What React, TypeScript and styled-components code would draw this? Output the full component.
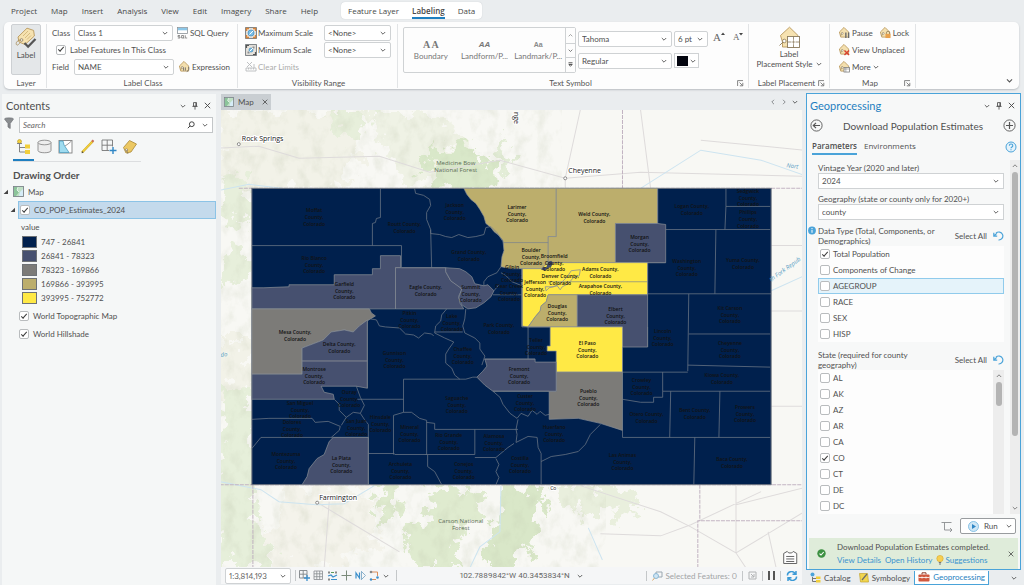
import React from "react";
import styled, { createGlobalStyle, css } from "styled-components";

const UI = `Lato, "Open Sans", "Liberation Sans", sans-serif`;
const MAPFONT = `"Open Sans", "Noto Sans", sans-serif`;
const BLUE = "#1f7fc0";
const SKY = "#4aa3d9";

const Global = createGlobalStyle`
  *, *::before, *::after { box-sizing: border-box; }
  body { margin: 0; background: #eaedef; font-family: ${UI}; font-size: 8px; line-height: 10px; color: #505050; }
  button, input, select { font: inherit; color: inherit; }
  h1, h2, h3, p { margin: 0; font-weight: 400; }
`;

/* ---------- shared controls ---------- */

const Shell = styled.div`
  min-height: 100vh;
  display: flex;
  flex-direction: column;
`;

const Plain = styled.button`
  display: inline-flex;
  align-items: center;
  gap: 2px;
  padding: 0;
  border: 0;
  background: none;
  white-space: nowrap;
`;

const Check = styled.input.attrs({ type: "checkbox" })`
  appearance: none;
  flex: none;
  display: grid;
  place-items: center;
  width: 10px;
  height: 10px;
  margin: 0;
  border: 1px solid #b9bcbe;
  border-radius: 2px;
  background: #fff;
  &:checked::after {
    content: "";
    width: 6px;
    height: 3px;
    margin-bottom: 2px;
    border: solid #3b3b3b;
    border-width: 0 0 1px 1px;
    transform: rotate(-48deg);
  }
`;

const PickFrame = styled.span<{ $w?: number; $square?: boolean }>`
  display: flex;
  align-items: center;
  height: 16px;
  width: ${(p) => (p.$w ? p.$w + "px" : "100%")};
  padding-right: 4px;
  border: 1px solid #cfd2d4;
  border-radius: ${(p) => (p.$square ? 0 : 2)}px;
  background: #fff;
`;

const PickSelect = styled.select`
  appearance: none;
  flex: 1;
  min-width: 0;
  height: 14px;
  padding: 0 0 0 3px;
  border: 0;
  background: none;
  line-height: 14px;
`;

const Chevron = ({ size = 6, up = false, color = "#555" }) => (
  <svg width={size} height={size} viewBox="0 0 6 6" fill="none" stroke={color} strokeWidth=".9">
    <path d={up ? "M.8 4 3 1.8 5.2 4" : "M.8 2 3 4.2 5.2 2"} />
  </svg>
);

function Pick(props: { label: string; value: string; w?: number; square?: boolean; id?: string }) {
  return (
    <PickFrame $w={props.w} $square={props.square}>
      <PickSelect id={props.id} aria-label={props.id ? undefined : props.label} defaultValue={props.value}>
        <option>{props.value}</option>
      </PickSelect>
      <Chevron />
    </PickFrame>
  );
}

/* ---------- icons ---------- */

const BigTag = () => (
  <svg width="22" height="22" viewBox="0 0 22 22">
    <path d="M3 10 12 1.2 18.6 3.4 19.4 9 10 17.5 4 15z" fill="#f6e2b0" stroke="#b9975a" strokeWidth=".9" />
    <path d="M8 9l5-5M10 11l5-5M12 12.5l4-4" stroke="#c9aa6c" strokeWidth=".7" />
    <circle cx="6.5" cy="13" r="1.4" fill="#fff" stroke="#8d7a55" strokeWidth=".8" />
    <path d="M6.5 13C3 13 .5 15 1.4 17.500 2 19 4 17.500 5 15.500" fill="none" stroke="#a58a58" strokeWidth=".8" />
    <path d="m9.500 16 3.600 3.700L20.500 12" fill="none" stroke="#555" strokeWidth="2.300" />
  </svg>
);

const PlacementIcon = () => (
  <svg width="23" height="23" viewBox="0 0 23 23">
    <path d="M2.500 9.500 11.500 1.200 20 9.500V21H4.500V16z" fill="#f6e2b0" stroke="#b9975a" strokeWidth=".9" />
    <circle cx="6.300" cy="15" r="1.800" fill="#fff" stroke="#8d7a55" strokeWidth=".8" />
    <path d="M5 16 1.500 19.500" stroke="#8d7a55" strokeWidth=".9" />
    <rect x="9.500" y="10.500" width="12" height="11" fill="#fff" stroke="#8a7a5c" strokeWidth=".9" />
    <path d="M15.500 10.500v11M9.500 16h12" stroke="#8a7a5c" strokeWidth=".8" />
    <rect x="13.200" y="13.800" width="4.600" height="4.400" fill="#fff" />
    <path d="M15.500 14.200v3.600M13.600 16h3.800" stroke="#8a7a5c" strokeWidth=".7" />
  </svg>
);

function TagIcon({ kind }: { kind: "expr" | "pause" | "lock" | "cross" | "more" }) {
  return (
    <svg width="12" height="13" viewBox="0 0 13 14">
      <path d="M1.500 6.500 6.500 1.500 11.500 6.500V12H3z" fill="#f3dfae" stroke="#b9975a" strokeWidth=".9" strokeLinejoin="round" />
      <path d="M4.500 7 3 10.500" stroke="#8d7a55" strokeWidth=".8" />
      <circle cx="4.600" cy="8" r="1" fill="#fff" stroke="#8d7a55" strokeWidth=".6" />
      {kind === "expr" && <path d="M6 11.500V8M8 8v3.500M9.500 12.500c2.500-1 2.500-3.500 2-5" fill="none" stroke="#666" strokeWidth=".9" />}
      {kind === "pause" && <path d="M8.500 7v6M11.500 7v6" stroke="#6a6a6a" strokeWidth="1.500" />}
      {kind === "lock" && (
        <g>
          <path d="M8 9V7.500a1.800 1.800 0 0 1 3.600 0V9" fill="none" stroke="#8d7a55" strokeWidth=".8" />
          <rect x="7" y="8.500" width="5.500" height="4.500" fill="#e9a14c" />
        </g>
      )}
      {kind === "cross" && <path d="m7 8 5 5M12 8l-5 5" stroke="#d8412f" strokeWidth="1.500" />}
      {kind === "more" && (
        <g>
          <rect x="6.500" y="8" width="6" height="5" fill="#fff" stroke="#777" strokeWidth=".8" />
          <path d="M6.500 9.700h6M8.500 8v5" stroke="#777" strokeWidth=".6" />
        </g>
      )}
    </svg>
  );
}

const SqlIcon = () => (
  <svg width="11" height="12" viewBox="0 0 11 12">
    <rect x=".5" y=".5" width="10" height="6" fill="#fff" stroke="#8b9298" strokeWidth=".8" />
    <rect x=".9" y=".9" width="9.200" height="2.400" fill="#8cc7e8" />
    <path d="M3 8.500H1v1.300h2V11H.800M4.600 8.500h2V11h-2zM6 10.500l1 1M8.300 8.300V11H10.200" fill="none" stroke="#777" strokeWidth=".8" />
  </svg>
);

const ScaleIcon = ({ min = false }) => (
  <svg width="12" height="12" viewBox="0 0 12 12">
    <rect x=".6" y=".6" width="10.800" height="10.800" fill="#e7e3dc" stroke="#6d7378" strokeWidth=".9" />
    {min ? (
      <g>
        <path d="M1.500 4V1.500H4M8 10.500h2.500V8" fill="none" stroke="#555" strokeWidth="1.200" />
        <path d="M7.500 2.500h2v2h-2zM2.500 7.500h2v2h-2z" fill="#8a8f94" />
      </g>
    ) : (
      <path d="M1.500 4V1.500H4M8 1.500h2.500V4M10.500 8v2.500H8M4 10.500H1.500V8" fill="none" stroke="#d8843a" strokeWidth="1.400" />
    )}
    <circle cx="6" cy="6" r={min ? 2 : 3} fill="#7cc0e8" stroke="#3f8dc0" strokeWidth=".7" />
    <path d="M4.500 7.500 8 4" stroke="#fff" strokeWidth="1" />
  </svg>
);

const ClearIcon = () => (
  <svg width="12" height="11" viewBox="0 0 12 11" fill="none" stroke="#b9bbbd" strokeWidth=".9">
    <path d="m2 1 5 5M7 1 2 6M1 7h10v3H1zM3.500 7v1.500M6 7v1.500M8.500 7v1.500M9 3v4" />
  </svg>
);

const Launcher = () => (
  <svg width="7" height="7" viewBox="0 0 7 7" fill="none" stroke="#666" strokeWidth=".8">
    <path d="M.6 6V.6H6M2.500 2.500l3 3M5.800 2.800v3h-3" />
  </svg>
);

const Close = ({ size = 7 }) => (
  <svg width={size} height={size} viewBox="0 0 7 7" stroke="#444" strokeWidth=".9">
    <path d="m.8.8 5.400 5.400M6.200.8.8 6.200" />
  </svg>
);

const Pin = () => (
  <svg width="6" height="8" viewBox="0 0 6 8" fill="none" stroke="#555" strokeWidth=".9">
    <path d="M1.500.6h3v3.600h-3zM.4 4.400h5.200M3 4.400v3.200M3.900.6v3.600" />
  </svg>
);

const MapGlyph = ({ size = 11 }) => (
  <svg width={size} height={size} viewBox="0 0 11 11">
    <rect x=".5" y=".5" width="10" height="10" fill="#bfe0c4" stroke="#7d868c" strokeWidth=".9" />
    <path d="M1 1h4l-1 3 2 2-3 4H1z" fill="#8cc49a" />
    <path d="M6 10 7 6l3-3v7z" fill="#d6ecf7" />
    <path d="M5 1 4 4l2 2" fill="none" stroke="#fff" strokeWidth=".7" />
  </svg>
);

/* ---------- menu tabs ---------- */

const TabBar = styled.nav`
  display: flex;
  align-items: center;
  height: 22px;
  padding: 0 11px 1px;
  gap: 14px;
  font-family: ${MAPFONT};
  color: #484848;
`;

const TabGroup = styled.div`
  display: flex;
  gap: 13px;
  height: 17px;
  margin-left: 9px;
  padding: 0 7px;
  border-radius: 4px;
  background: #fff;
  box-shadow: 0 0 1px #b8bcc0;
`;

const MenuTab = styled(Plain)<{ $on?: boolean }>`
  height: 17px;
  ${(p) =>
    p.$on &&
    css`
      font-weight: 600;
      box-shadow: inset 0 -2px 0 ${BLUE};
    `}
`;

/* ---------- ribbon ---------- */

const Ribbon = styled.section`
  display: flex;
  margin: 0 5px 0 4px;
  height: 67px;
  border-radius: 5px;
  background: #fdfdfd;
  box-shadow: 0 1px 2px #b9bdc1;
`;

const Group = styled.div<{ $w: number }>`
  display: flex;
  flex-direction: column;
  width: ${(p) => p.$w}px;
  margin: 2px 0 1px;
  border-right: 1px solid #e2e4e6;
`;

const GroupBody = styled.div<{ $pad?: string }>`
  flex: 1;
  padding: ${(p) => p.$pad || "0 6px"};
`;

const Caption = styled.div`
  display: flex;
  align-items: center;
  height: 10px;
  padding: 0 4px 0 6px;
  color: #555;
  span { flex: 1; text-align: center; }
`;

const Rows = styled.div`
  display: grid;
  grid-auto-rows: 17px;
  align-items: center;
`;

const Row = styled.div<{ $gap?: number; $pl?: number }>`
  display: flex;
  align-items: center;
  gap: ${(p) => p.$gap ?? 4}px;
  padding-left: ${(p) => p.$pl ?? 0}px;
`;

const FieldLabel = styled.label`
  width: 18px;
`;

const InlineLabel = styled.label`
  display: flex;
  align-items: center;
  gap: 4px;
`;

const LabelButton = styled.button`
  display: flex;
  flex-direction: column;
  align-items: center;
  gap: 1px;
  width: 30px;
  height: 51px;
  padding: 2px 0 0;
  border: 1px solid #cdd0d3;
  border-radius: 2px;
  background: #e4e7e9;
`;

const ScaleRow = styled.div<{ $off?: boolean }>`
  display: grid;
  grid-template-columns: 12px 1fr 67px;
  align-items: center;
  column-gap: 1px;
  color: ${(p) => (p.$off ? "#ababab" : "inherit")};
`;

const Symbols = styled.div`
  display: flex;
  align-items: flex-start;
  gap: 2px;
`;

const Gallery = styled.div`
  display: flex;
  width: 173px;
  height: 46px;
  border: 1px solid #cfd2d4;
  border-radius: 2px;
`;

const GalleryItem = styled.button<{ $look: "serif" | "ital" | "small" }>`
  flex: 1;
  min-width: 0;
  padding: 0;
  border: 0;
  background: none;
  color: #777;
  b {
    display: block;
    height: 12px;
    ${(p) => p.$look === "serif" && `font: 700 10px/12px "Liberation Serif", serif;`}
    ${(p) => p.$look === "ital" && `font: italic 700 8px/12px "Liberation Sans", sans-serif;`}
    ${(p) => p.$look === "small" && `font: 700 7px/12px "Liberation Sans", sans-serif; color: #8a8a8a;`}
  }
`;

const Spinner = styled.div`
  display: grid;
  grid-template-rows: repeat(3, 1fr);
  width: 10px;
  border-left: 1px solid #cfd2d4;
  button {
    display: grid;
    place-items: center;
    padding: 0;
    border: 0;
    background: #fdfdfd;
  }
  button + button { border-top: 1px solid #cfd2d4; }
`;

const FontGrid = styled.div`
  display: grid;
  grid-template-columns: 94px 34px;
  gap: 6px 2px;
  padding-top: 4px;
`;

const ColorButton = styled.button`
  display: flex;
  align-items: center;
  gap: 2px;
  width: 25px;
  height: 15px;
  padding: 0 0 0 2px;
  border: 1px solid #cfd2d4;
  background: #fff;
  i { width: 11px; height: 10px; background: #03050f; }
`;

const SizeButtons = styled.div`
  display: flex;
  gap: 8px;
  padding: 5px 0 0 3px;
  button { font-family: "Liberation Serif", serif; color: #666; gap: 0; }
  svg { align-self: flex-start; }
`;

const Letter = styled.span<{ $big?: boolean }>`
  font-size: ${(p) => (p.$big ? 11 : 9)}px;
`;

const Stack = styled.button`
  display: flex;
  flex-direction: column;
  align-items: center;
  width: 100%;
  padding: 0;
  border: 0;
  background: none;
  span { display: flex; align-items: center; gap: 3px; }
`;

const RibbonEnd = styled.div`
  flex: 1;
  display: flex;
  align-items: flex-end;
  justify-content: flex-end;
  padding: 0 6px 5px;
`;

function RibbonBar() {
  return (
    <Ribbon>
      <Group $w={43}>
        <GroupBody $pad="0 0 0 7px">
          <LabelButton>
            <BigTag />
            Label
          </LabelButton>
        </GroupBody>
        <Caption><span>Layer</span></Caption>
      </Group>
      <Group $w={191}>
        <GroupBody $pad="0 5px">
          <Rows>
            <Row>
              <FieldLabel htmlFor="class">Class</FieldLabel>
              <Pick id="class" label="Class" value="Class 1" w={99} />
              <Plain><SqlIcon />SQL Query</Plain>
            </Row>
            <Row $pl={4}>
              <InlineLabel><Check defaultChecked />Label Features In This Class</InlineLabel>
            </Row>
            <Row>
              <FieldLabel htmlFor="field">Field</FieldLabel>
              <Pick id="field" label="Field" value="NAME" w={100} />
              <Plain><TagIcon kind="expr" />Expression</Plain>
            </Row>
          </Rows>
        </GroupBody>
        <Caption><span>Label Class</span></Caption>
      </Group>
      <Group $w={160}>
        <GroupBody $pad="0 6px 0 7px">
          <Rows>
            <ScaleRow><ScaleIcon /><label htmlFor="maxs">Maximum Scale</label><Pick id="maxs" label="Maximum Scale" value="&lt;None&gt;" /></ScaleRow>
            <ScaleRow><ScaleIcon min /><label htmlFor="mins">Minimum Scale</label><Pick id="mins" label="Minimum Scale" value="&lt;None&gt;" /></ScaleRow>
            <ScaleRow $off><ClearIcon /><span>Clear Limits</span></ScaleRow>
          </Rows>
        </GroupBody>
        <Caption><span>Visibility Range</span></Caption>
      </Group>
      <Group $w={351}>
        <GroupBody $pad="3px 0 0 5px">
          <Symbols>
            <Gallery>
              <GalleryItem $look="serif"><b>A A</b>Boundary</GalleryItem>
              <GalleryItem $look="ital"><b>AA</b>Landform/P...</GalleryItem>
              <GalleryItem $look="small"><b>Aa</b>Landmark/P...</GalleryItem>
              <Spinner>
                <button aria-label="Scroll up"><Chevron up size={5} color="#888" /></button>
                <button aria-label="Scroll down"><Chevron size={5} /></button>
                <button aria-label="Expand gallery">
                  <svg width="5" height="6" viewBox="0 0 5 6" fill="none" stroke="#444" strokeWidth=".9"><path d="M.5.800h4M.800 2.500 2.500 4.200 4.200 2.500z" /></svg>
                </button>
              </Spinner>
            </Gallery>
            <FontGrid>
              <Pick label="Font" value="Tahoma" />
              <Pick label="Size" value="6 pt" />
              <Pick label="Style" value="Regular" />
              <ColorButton aria-label="Text color"><i /><Chevron /></ColorButton>
            </FontGrid>
            <SizeButtons>
              <Plain aria-label="Increase size">
                <Letter $big>A</Letter>
                <svg width="4" height="4" viewBox="0 0 4 4"><path d="M0 3 2 .5 4 3z" fill="#444" /></svg>
              </Plain>
              <Plain aria-label="Decrease size">
                <Letter>A</Letter>
                <svg width="4" height="4" viewBox="0 0 4 4"><path d="M0 1 2 3.500 4 1z" fill="#444" /></svg>
              </Plain>
            </SizeButtons>
          </Symbols>
        </GroupBody>
        <Caption><span>Text Symbol</span><Launcher /></Caption>
      </Group>
      <Group $w={81}>
        <GroupBody $pad="2px 0 0">
          <Stack>
            <PlacementIcon />
            <span>Label</span>
            <span>Placement Style <Chevron /></span>
          </Stack>
        </GroupBody>
        <Caption><span>Label Placement</span><Launcher /></Caption>
      </Group>
      <Group $w={86}>
        <GroupBody $pad="0 0 0 8px">
          <Rows>
            <Row $gap={6}><Plain><TagIcon kind="pause" />Pause</Plain><Plain><TagIcon kind="lock" />Lock</Plain></Row>
            <Row><Plain><TagIcon kind="cross" />View Unplaced</Plain></Row>
            <Row><Plain><TagIcon kind="more" />More <Chevron /></Plain></Row>
          </Rows>
        </GroupBody>
        <Caption><span>Map</span><Launcher /></Caption>
      </Group>
      <RibbonEnd><Chevron size={7} /></RibbonEnd>
    </Ribbon>
  );
}

/* ---------- body ---------- */

const Body = styled.main`
  flex: 1;
  display: flex;
  min-height: 0;
  padding-top: 4px;
`;

const PaneHead = styled.header`
  display: flex;
  align-items: center;
  gap: 6px;
  height: 23px;
  h2 { flex: 1; font-size: 11px; line-height: 14px; }
`;

const ContentsPane = styled.aside`
  width: 214px;
  margin: 1px 0 2px 2px;
  background: #f5f7f7;
  ${PaneHead} { padding: 0 5px 0 4px; }
`;

const SearchRow = styled.div`
  display: flex;
  gap: 5px;
  padding: 0 3px 0 2px;
`;

const SearchBox = styled.div`
  flex: 1;
  display: flex;
  align-items: center;
  gap: 7px;
  height: 16px;
  padding-right: 4px;
  border: 1px solid #c3c6c8;
  background: #fff;
  input {
    flex: 1;
    min-width: 0;
    padding: 0 3px;
    border: 0;
    background: none;
    font-style: italic;
    outline: 0;
  }
  input::placeholder { color: #666; }
`;

const ViewIcons = styled.div`
  display: flex;
  width: 128px;
  margin: 6px 0 0 11px;
  border-bottom: 1px solid #dcdee0;
`;

const ViewIcon = styled.button<{ $on?: boolean }>`
  flex: 1;
  display: grid;
  place-items: center;
  height: 22px;
  padding: 0 0 6px;
  border: 0;
  border-bottom: 2px solid ${(p) => (p.$on ? BLUE : "transparent")};
  background: none;
`;

const Heading = styled.h3`
  padding: 6px 11px 0;
  font-size: 10px;
  font-weight: 700;
  line-height: 14px;
`;

const TreeRow = styled.div<{ $pl: number; $on?: boolean; $h?: number }>`
  display: flex;
  align-items: center;
  gap: 4px;
  height: ${(p) => p.$h ?? 18}px;
  padding-left: ${(p) => p.$pl}px;
  ${(p) => p.$on && css`
    flex: 1;
    border: 1px solid #8cc3e6;
    background: #c4daec;
  `}
`;

const TreeLine = styled.div`
  display: flex;
  align-items: center;
  gap: 2px;
  padding-left: 8px;
`;

const Legend = styled.ul`
  margin: 0;
  padding: 0 0 2px 20px;
  list-style: none;
  li { display: flex; align-items: center; gap: 4px; height: 14px; }
`;

const Swatch = styled.i<{ $c: string }>`
  width: 15px;
  height: 12px;
  border: 1px solid #6e7276;
  background: ${(p) => p.$c};
`;

const Expander = () => (
  <svg width="6" height="6" viewBox="0 0 6 6"><path d="M5 .8V5H.6z" fill="#444" /></svg>
);

const Y = "#f2cf3c";
const viewIcons = [
  <g key="a"><circle cx="3.500" cy="2.500" r="2" fill={Y} stroke="#b99a20" strokeWidth=".6" /><path d="M1 4.500h5M3.500 5v8H9M3.500 8.500H9" fill="none" stroke="#777" strokeWidth=".9" /><rect x="9" y="5.500" width="5" height="4" fill={Y} /><rect x="9" y="11" width="5" height="4" fill={Y} /></g>,
  <g key="b" fill="#ededed" stroke="#8a8a8a" strokeWidth=".9"><path d="M1 3.500v8c0 3 13 3 13 0v-8" /><ellipse cx="7.500" cy="3.500" rx="6.500" ry="2.300" /></g>,
  <g key="c"><rect x="1" y="1.500" width="13" height="12.500" fill="#fff" stroke="#808080" strokeWidth=".9" /><path d="M1.500 2H5l1 4 5 7.500H1.500z" fill="#9fdcf0" stroke="#4d9dbf" strokeWidth=".8" /><path d="M7 7l3-2 3.500-3" fill="none" stroke="#999" /></g>,
  <g key="d"><path d="M2 13.500 13 2" stroke="#caa92a" strokeWidth="2.400" /><path d="M2.800 12.600 13 2" stroke={Y} strokeWidth="1.400" /><path d="m1.500 14.300.700-2 1.300 1.200z" fill="#444" /><path d="m12 2.800 1.500-1.500" stroke="#c96a5a" strokeWidth="2" /></g>,
  <g key="e" fill="none"><path d="M1 1h10.500v10.500H1zM6.200 1v10.500M1 6.200h10.500" stroke="#777" strokeWidth=".9" /><path d="M12 7.500v8M8 11.500h8" stroke="#f5f7f7" strokeWidth="3" /><path d="M12 8v7M8.500 11.500h7" stroke="#2f86c5" strokeWidth="1.400" /></g>,
  <g key="f"><path d="M1.500 8.500 7.500 1.500 14.500 5 9 13 4 14z" fill="#ecc862" stroke="#a98836" strokeWidth=".8" /><circle cx="4.500" cy="11" r="1.200" fill="#fff" stroke="#8d7a55" strokeWidth=".7" /><path d="M4.500 11 6 15" stroke="#8d7a55" strokeWidth=".8" /></g>,
];
const viewNames = ["Drawing order", "Data source", "Selection", "Editing", "Snapping", "Labeling"];

const classes: [string, string][] = [
  ["#00204d", "747 - 26841"],
  ["#46506f", "26841 - 78323"],
  ["#7c7b78", "78323 - 169866"],
  ["#bcae6c", "169866 - 393995"],
  ["#ffe945", "393995 - 752772"],
];

function Contents() {
  return (
    <ContentsPane>
      <PaneHead><h2>Contents</h2><Chevron /><Pin /><Close /></PaneHead>
      <SearchRow>
        <svg width="10" height="12" viewBox="0 0 10 12"><path d="M.5 2c0-1.500 9-1.500 9 0L6.200 6.500v5L4 10V6.500z" fill="#8a8d90" stroke="#6c6f72" strokeWidth=".7" /></svg>
        <SearchBox>
          <input placeholder="Search" aria-label="Search" />
          <svg width="8" height="8" viewBox="0 0 8 8" fill="none" stroke="#444" strokeWidth="1"><circle cx="4.800" cy="3.200" r="2.400" /><path d="M3 5 .8 7.200" /></svg>
          <Chevron />
        </SearchBox>
      </SearchRow>
      <ViewIcons>
        {viewIcons.map((g, i) => (
          <ViewIcon key={i} $on={i === 0} aria-label={viewNames[i]}><svg width="16" height="16" viewBox="0 0 16 16">{g}</svg></ViewIcon>
        ))}
      </ViewIcons>
      <Heading>Drawing Order</Heading>
      <TreeRow $pl={1} $h={19}><Expander /><MapGlyph />Map</TreeRow>
      <TreeLine>
        <Expander />
        <TreeRow as="label" $pl={1} $on><Check defaultChecked />CO_POP_Estimates_2024</TreeRow>
      </TreeLine>
      <TreeRow $pl={19} $h={16}>value</TreeRow>
      <Legend>
        {classes.map(([c, t]) => (
          <li key={t}><Swatch $c={c} />{t}</li>
        ))}
      </Legend>
      <TreeRow as="label" $pl={17}><Check defaultChecked />World Topographic Map</TreeRow>
      <TreeRow as="label" $pl={17}><Check defaultChecked />World Hillshade</TreeRow>
    </ContentsPane>
  );
}

/* ---------- map ---------- */

const MapPane = styled.section`
  flex: 1;
  min-width: 0;
  display: flex;
  flex-direction: column;
  margin: 1px 4px 3px 5px;
`;

const DocTabs = styled.div`
  display: flex;
  align-items: center;
  height: 16px;
`;

const DocTab = styled.div`
  display: flex;
  align-items: center;
  gap: 4px;
  width: 50px;
  height: 16px;
  padding: 0 3px;
  background: #c9ced2;
  span { flex: 1; }
`;

const DocArrows = styled.div`
  display: flex;
  gap: 5px;
  margin-left: auto;
  padding-right: 4px;
`;

const MapView = styled.div`
  position: relative;
  flex: 1;
  min-height: 0;
  > svg { position: absolute; inset: 0; width: 100%; height: 100%; }
`;

const StatusBar = styled.footer`
  display: flex;
  align-items: center;
  height: 17px;
  padding: 0 4px;
  background: #f5f6f7;
  color: #666;
  font-variant-numeric: proportional-nums;
`;

const Tools = styled.div`
  display: flex;
  align-items: center;
  gap: 3px;
  margin-left: 4px;
  padding: 0 7px 0 3px;
  border: solid #c4c7c9;
  border-width: 0 1px;
  button { display: flex; }
`;

const Coords = styled.div`
  display: flex;
  align-items: center;
  gap: 7px;
  margin: 0 auto;
  font-family: Roboto, "Open Sans", sans-serif;
`;

const Cell = styled.div<{ $dim?: boolean }>`
  display: flex;
  align-items: center;
  gap: 3px;
  height: 10px;
  padding: 0 5px;
  border-left: 1px solid #c4c7c9;
  color: ${(p) => (p.$dim ? "#a2a4a6" : "inherit")};
  &:last-child { padding-right: 0; }
`;

const NAVY = "#00204d";
const SLATE = "#46506f";
const GRAY = "#7c7b78";
const KHAKI = "#bcae6c";
const YELLOW = "#ffe945";

const areas: [string, string][] = [
  [KHAKI, "464,188 467,194 471,199 476,203 480,209 484,216 486,223 491,227 494,231 499,235 503,240 504,250 502,256 501,266 511,268 548,268 548,236 556,236 556,188"],
  [KHAKI, "556,188 657,188 657,223 615,223 615,262 548,262 548,236 556,236"],
  [SLATE, "615,223 657,223 665,224 665,262 615,262"],
  [YELLOW, "522,268 541,268 548,262 647,262 647,294 548,294 546,301 541,305 540,310 535,316 528,326 522,325"],
  [KHAKI, "548,294 577,294 577,326 528,326 535,316 540,310 541,305 546,301"],
  [SLATE, "577,294 647,294 647,346 622,346 622,326 577,326"],
  [YELLOW, "550,326 622,326 622,371 556,371 556,350 547,350 547,345 550,345"],
  [GRAY, "556,371 622,371 622,429 600,422 578,417 549,418 549,390 556,390"],
  [SLATE, "477,376 483,370 487,365 485,358 535,358 535,361 556,361 556,390 493,390 485,384"],
  [SLATE, "253,287 265,287 290,286 290,284 335,284 335,274 373,274 373,268 381,268 381,255 401,255 401,267 396,267 396,308 253,308"],
  [SLATE, "396,267 446,267 446,271 451,280 460,286 462,289 459,295 460,302 464,308 396,308"],
  [SLATE, "446,267 460,268 466,271 472,276 475,283 484,285 488,284 494,290 491,296 484,302 476,307 468,308 462,304 459,297 462,288 451,280 446,271"],
  [GRAY, "253,308 370,308 372,312 376,315 371,318 360,325 354,331 345,329 332,331 324,339 303,347 303,373 253,373"],
  [SLATE, "368,319 368,360 303,360 303,347 324,339 332,331 345,329 354,331 360,325"],
  [SLATE, "253,373 303,373 303,360 368,360 368,387 357,385 322,385 325,391 334,393 335,398 253,398"],
  [SLATE, "303,483 308,475 310,467 318,457 325,453 330,440 334,436 369,436 369,483"],
];

const borders = [
  "M381 188V217L377 218 376 222 373 223V245M253 245H402V267H446",
  "M415 188 416 193 424 195 430 199 431 205 427 212 427 219 431 229 431 233 440 234 446 236 452 237 459 234 468 237 476 236 484 234 486 227 491 226M431 229 432 267",
  "M491 226 497 232 503 241M501 266 497 272 488 276 484 281 484 285M501 272 506 275 512 281 522 285M493 294H522M522 268V326H550M494 290 499 284",
  "M371 318 377 319 380 325 386 326 400 327 406 333 414 334 419 337 425 332 432 333 434 335M447 308 442 314 441 320 436 325 435 332 445 337 454 341 449 348 446 353 446 362 452 367 455 374 460 378M435 331H463M466 308 465 318 463 325 465 332 475 337 480 342 480 348 485 355 482 364M404 411V378H466L473 376 477 376M368 319V387M358 398H404M484 358H535",
  "M335 398 340 403 340 409 347 416 354 411 361 412 365 404 361 396 357 385M253 418 270 417H313L316 421 329 420 341 425 340 429 332 436M347 416 342 424M361 412 365 418 369 423V483M369 452H395M253 447 262 436H369",
  "M394 453V414L404 411 412 411 420 417 427 419V453H395M427 421 435 422V428H513M426 453H475V428M475 456H496L508 446 514 442M428 453V465L435 470 442 483M496 457 499 463 496 470 499 476 496 483",
  "M493 390 500 396 503 403 510 412 517 417 521 412 528 415 532 409 537 413 540 410 545 414 549 413M518 418 516 428 517 433 516 441 528 435 537 436 538 446 541 452 541 483M541 460 551 455 565 453 578 450 585 443 590 433 600 423M513 428H518M493 390H549",
  "M528 326V358M657 188V223M725 188V206H769M725 206 724 229M665 229H769M715 229 714 293M647 262H665M647 293H770M688 293 687 370M688 333H769M687 364 769 366M622 346V371M647 346V326M622 371H687",
  "M662 371V390H769M622 398 640 401 653 401V396H662V390M622 429V436H769M670 390 669 436M719 390 718 436M694 436 693 483M647 262V294",
  "M503 242H548M548 268H541M548 281H647M522 326V268",
];

const labels: [number, number, string][] = [
  [315, 210, "Moffat|County,|Colorado"], [405, 223, "Routt County,|Colorado"], [455, 205, "Jackson|County,|Colorado"],
  [517, 207, "Larimer|County,|Colorado"], [594, 214, "Weld County,|Colorado"], [691, 206, "Logan County,|Colorado"],
  [747, 191, "Sedgwick|County,|Colorado"], [747, 212, "Phillips|County,|Colorado"], [639, 236, "Morgan|County,|Colorado"],
  [686, 260, "Washington|County,|Colorado"], [742, 259, "Yuma County,|Colorado"], [315, 257, "Rio Blanco|County,|Colorado"],
  [469, 251, "Grand County,|Colorado"], [531, 249, "Boulder|County,|Colorado"], [554, 255, "Broomfield|County,|Colorado"],
  [600, 268, "Adams County,|Colorado"], [560, 275, "Denver County,|Colorado"], [600, 285, "Arapahoe County,|Colorado"],
  [535, 281, "Jefferson|County,|Colorado"], [512, 266, "Gilpin|County,|Colorado"], [509, 285, "Clear Creek|County,|Colorado"],
  [345, 283, "Garfield|County,|Colorado"], [426, 286, "Eagle County,|Colorado"], [471, 286, "Summit|County,|Colorado"],
  [557, 305, "Douglas|County,|Colorado"], [615, 308, "Elbert|County,|Colorado"], [729, 307, "Kit Carson|County,|Colorado"],
  [410, 312, "Pitkin|County,|Colorado"], [452, 315, "Lake|County,|Colorado"], [499, 324, "Park County,|Colorado"],
  [296, 331, "Mesa County,|Colorado"], [340, 343, "Delta County,|Colorado"], [395, 352, "Gunnison|County,|Colorado"],
  [463, 348, "Chaffee|County,|Colorado"], [536, 339, "Teller|County,|Colorado"], [587, 342, "El Paso|County,|Colorado"],
  [662, 330, "Lincoln|County,|Colorado"], [729, 342, "Cheyenne|County,|Colorado"], [519, 368, "Fremont|County,|Colorado"],
  [315, 368, "Montrose|County,|Colorado"], [588, 390, "Pueblo|County,|Colorado"], [641, 379, "Crowley|County,|Colorado"],
  [721, 374, "Kiowa County,|Colorado"], [350, 391, "Ouray|County,|Colorado"], [457, 397, "Saguache|County,|Colorado"],
  [525, 395, "Custer|County,|Colorado"], [301, 402, "San Miguel|County,|Colorado"], [293, 421, "Dolores|County,|Colorado"],
  [357, 420, "San Juan|County,|Colorado"], [381, 416, "Hinsdale|County,|Colorado"], [410, 426, "Mineral|County,|Colorado"],
  [449, 434, "Rio Grande|County,|Colorado"], [494, 435, "Alamosa|County,|Colorado"], [554, 426, "Huerfano|County,|Colorado"],
  [646, 413, "Otero County,|Colorado"], [694, 409, "Bent County,|Colorado"], [744, 406, "Prowers|County,|Colorado"],
  [287, 452, "Montezuma|County,|Colorado"], [342, 456, "La Plata|County,|Colorado"], [401, 462, "Archuleta|County,|Colorado"],
  [464, 462, "Conejos|County,|Colorado"], [520, 456, "Costilla|County,|Colorado"], [622, 453, "Las Animas|County,|Colorado"],
  [731, 457, "Baca County,|Colorado"],
];

function StateMap() {
  return (
    <svg viewBox="221 110 581 455" preserveAspectRatio="xMidYMid slice" fontFamily={MAPFONT}>
      <defs>
        <filter id="rough" x="-10%" y="-10%" width="120%" height="120%">
          <feTurbulence type="fractalNoise" baseFrequency=".07" numOctaves="5" seed="4" />
          <feDisplacementMap in="SourceGraphic" scale="44" xChannelSelector="R" yChannelSelector="G" />
        </filter>
        <filter id="relief" x="0" y="0" width="100%" height="100%">
          <feTurbulence type="fractalNoise" baseFrequency=".08 .06" numOctaves="4" seed="9" />
          <feColorMatrix values="0 0 0 0 .5  0 0 0 0 .54  0 0 0 0 .4  1.600 0 0 0 -.720" />
        </filter>
      </defs>
      <rect x="221" y="110" width="582" height="456" fill="#f8f8f4" />
      <g filter="url(#rough)" opacity=".8">
        <path d="M221 110h110l30 40-20 40H221zM221 340h32v150h-32z" fill="#f1f1e6" />
        <path d="M221 175h32v50h-32zM221 250h30v30h-30zM330 110h40l-8 30-24-6z" fill="#e3edd5" />
        <path d="M365 110h40l50 20 40 55h-90l-20-40z" fill="#eef1e2" />
        <path d="M428 152l30-10 30 14 6 34h-50l-18-20z" fill="#d2e5bf" />
        <path d="M500 130l12 20-8 30-8-20z" fill="#dfebd0" />
        <path d="M221 390h34v120l20 30-10 26H221z" fill="#e2edd4" />
        <path d="M375 484h24v34h-22zM430 484l50 6 6 30-30 10 6 36h-50l-8-40 30-14z" fill="#d9e9c7" />
        <path d="M505 484h40l-8 40-12 30-20 12h-26l18-40z" fill="#d2e4be" />
        <path d="M555 484h60l30 20-30 10-40-2z" fill="#e6eed8" />
        <path d="M280 484h90l10 60-60 22h-50z" fill="#f4f3ea" />
      </g>
      <rect x="221" y="110" width="340" height="80" filter="url(#relief)" opacity=".35" />
      <rect x="221" y="190" width="34" height="376" filter="url(#relief)" opacity=".35" />
      <rect x="255" y="482" width="350" height="84" filter="url(#relief)" opacity=".35" />
      <g fill="none" stroke="#dedbdb" strokeWidth="1">
        <path d="M221 148 260 146 300 158 380 156 430 172 500 160 565 178 640 172 803 176M565 178 580 110M565 178V188M640 110 650 188M700 140 803 150" />
        <path d="M317 500 350 520 400 550M330 500 325 566M580 484 660 510 690 525 735 551 803 510M735 484V551L745 566M735 503 803 486M767 530 775 566M600 532 660 534 690 523 760 490" />
        <path d="M770 245H803M770 310H803M770 405H803" />
      </g>
      <g fill="none" stroke="#cde4f0" strokeWidth="1">
        <path d="M221 480 262 488 280 500 317 503 345 502 375 484M501 484 500 530 480 545 470 566M588 526 602 558M221 190 250 184 300 190M640 188 700 150 760 160 803 175M770 290 803 275" />
      </g>
      <g fill="none" stroke="#c2b4c2" strokeWidth="1" strokeDasharray="4 1">
        <path d="M221 483H803M254 483V566M699 483V519M697 566V519H803M240 188H803M622 110V188" />
      </g>
      <rect x="253" y="188" width="517" height="295" fill={NAVY} stroke="#6d7480" strokeWidth="1" />
      <g stroke="#8a8f96" strokeWidth=".700">
        {areas.map(([c, p], i) => (
          <polygon key={i} points={p} fill={c} />
        ))}
      </g>
      <g fill="none" stroke="#78818c" strokeWidth=".800" opacity=".850">
        {borders.map((d, i) => (
          <path key={i} d={d} />
        ))}
      </g>
      <path d="m541 269 2-3 3 1 2-6 3-1 2 2-2 4-4 2-2 2z" fill={SLATE} />
      <path d="M553 286 560 283 567 276 571 270 580 269 579 275 573 277 568 283 562 286 560 289 557 285 549 287 546 290 545 286z" fill="none" stroke="#8a8f96" strokeWidth=".800" />
      <g fontSize="5" textAnchor="middle" fill="#121212" fontWeight="600">
        {labels.map(([x, y, t]) =>
          t.split("|").map((line, i) => (
            <text key={t + i} x={x} y={y + 2 + Math.round(i * 6.5)}>{line}</text>
          ))
        )}
      </g>
      <g fill="#222" fontSize="7" fontWeight="500" stroke="#fff" strokeWidth="2" paintOrder="stroke">
        <text x="243" y="141">Rock Springs</text>
        <text x="568" y="173">Cheyenne</text>
        <text x="320" y="498">Farmington</text>
        <text x="514" y="112" transform="rotate(90 514 112)" fontWeight="400">nge</text>
        <text x="550" y="488" fontSize="5" fontWeight="400">Co</text>
      </g>
      <g fill="#fff" stroke="#777" strokeWidth=".800">
        <circle cx="240" cy="144" r="1.500" /><circle cx="565" cy="178" r="1.500" /><circle cx="318" cy="501" r="1.500" />
      </g>
      <g fill="#5d6e58" fontSize="6" textAnchor="middle">
        <text x="456" y="165">Medicine Bow</text><text x="456" y="172">National Forest</text>
        <text x="461" y="521">Carson National</text><text x="461" y="528">Forest</text>
      </g>
      <g fill="#5a9ec4" fontSize="6" fontStyle="italic">
        <text x="785" y="167" transform="rotate(8 785 167)">Nort</text>
        <text x="770" y="281" transform="rotate(-36 770 281)">th Fork Repub</text>
        <text x="222" y="356" transform="rotate(-8 222 356)">do</text>
      </g>
      <g fill="#fff" stroke="#555" strokeWidth=".900">
        <path d="M782.500 551.500 786 549.500l1.500 1.500h3l1.500-1.500 3.500 2v10h-13z" />
        <path d="M785 554.500h8M785 557h8M785 559.500h8" />
      </g>
    </svg>
  );
}

const statusIcons = [
  <g key="0" fill="none"><path d="M.5.5h7.500v7.500H.5zM4.200.5V8M.5 4.200H8" stroke="#808488" strokeWidth=".9" /><path d="M8 5v6M5 8h6" stroke="#3c8fcb" strokeWidth="1.300" /></g>,
  <path key="1" d="M1 1h8.500v8.500H1zM3.800 1v8.500M6.700 1v8.500M1 3.800h8.500M1 6.700h8.500" fill="none" stroke="#888c90" strokeWidth=".8" />,
  <g key="2" fill="none"><path d="M1 1.500h2v2H1zM8 1.500h2v2H8zM1 8.500h2v2H1z" fill="#888" /><path d="M1 6 4 5l2 2 4-2M4 9.500h6" stroke="#3c8fcb" strokeWidth="1.200" /><path d="M4 2.500h3" stroke="#5a9a5a" /></g>,
  <path key="3" d="M5.500.5v10M.5 5.500h10" stroke="#7a8a7a" strokeWidth="1" />,
  <g key="4"><path d="M1 8.500V3l3.500 5V2.500" fill="none" stroke="#3c8fcb" strokeWidth="1.200" /><path d="M6.500 1v9M7 2l3.500 3.500L7 9" fill="none" stroke="#7fa9c6" strokeWidth=".9" /></g>,
  <g key="5" fill="none"><path d="M2 9.500h5M2 2h6.500v4" stroke="#d8844c" strokeWidth=".9" /><circle cx="2" cy="2" r="1.300" fill="#888" /><circle cx="8.500" cy="7.500" r="1.300" fill="#3c8fcb" /><circle cx="2" cy="9.500" r="1.200" fill="#3c8fcb" /></g>,
];
const statusNames = ["Constraints", "Grid", "Snapping", "Inference", "North", "Dynamic constraints"];

const Bars = styled.i`
  width: 7px;
  height: 9px;
  border: solid #555;
  border-width: 0 2px;
`;

function MapArea() {
  return (
    <MapPane>
      <DocTabs>
        <DocTab><MapGlyph size={10} /><span>Map</span><Close size={6} /></DocTab>
        <DocArrows>
          <svg width="6" height="6" viewBox="0 0 6 6" fill="none" stroke="#8a8d90"><path d="M4 .8 1.800 3 4 5.200" /></svg>
          <svg width="6" height="6" viewBox="0 0 6 6" fill="none" stroke="#8a8d90"><path d="M2 .8 4.200 3 2 5.200" /></svg>
          <Chevron />
        </DocArrows>
      </DocTabs>
      <MapView><StateMap /></MapView>
      <StatusBar>
        <Pick label="Map scale" value="1:3,814,193" w={66} />
        <Tools>
          {statusIcons.map((g, i) => (
            <Plain key={i} aria-label={statusNames[i]}><svg width="11" height="11" viewBox="0 0 11 11">{g}</svg></Plain>
          ))}
          <Chevron />
        </Tools>
        <Coords>102.7889842°W 40.3453834°N <Chevron /></Coords>
        <Cell $dim>
          <svg width="11" height="10" viewBox="0 0 11 10" fill="none"><path d="M4 1h6v5H4z" stroke="#9aa7b0" /><circle cx="4" cy="5" r="2.500" fill="#cfe5f3" stroke="#8bb8d6" /><path d="m2.500 7-2 2.500" stroke="#d8a86a" /></svg>
          Selected Features: 0
        </Cell>
        <Cell $dim><svg width="9" height="9" viewBox="0 0 9 9" fill="none" stroke="#b0b2b4"><path d="M1 1h7v7H1zM3 3l3 3M6 3v3H3" /></svg></Cell>
        <Cell><Bars /></Cell>
        <Cell><svg width="12" height="10" viewBox="0 0 12 10" fill="none" stroke="#3c9ad6" strokeWidth="1.500"><path d="M1.500 4.500A4 3.500 0 0 1 9 2.500M10.500 5.500A4 3.500 0 0 1 3 7.500M10 0v3.300H6.500M2 10V6.700h3.500" /></svg></Cell>
      </StatusBar>
    </MapPane>
  );
}

/* ---------- geoprocessing ---------- */

const RightColumn = styled.aside`
  width: 215px;
  margin-right: 3px;
  display: flex;
  flex-direction: column;
`;

const GeoPane = styled.section`
  flex: 1;
  min-height: 0;
  display: flex;
  flex-direction: column;
  border: 1px solid ${SKY};
  background: #f7f8f8;
  ${PaneHead} { padding: 0 5px 0 3px; }
  h2 { color: ${BLUE}; }
`;

const TitleRow = styled.div`
  display: flex;
  align-items: center;
  height: 17px;
  padding: 0 4px 0 3px;
  h1 { flex: 1; text-align: center; font-size: 10px; line-height: 14px; }
  button svg { display: block; }
`;

const ParamTabs = styled.div`
  display: flex;
  align-items: center;
  gap: 7px;
  height: 26px;
  padding: 0 3px 0 5px;
  font-family: ${MAPFONT};
  > svg { margin-left: auto; }
`;

const ParamTab = styled(Plain)<{ $on?: boolean }>`
  height: 16px;
  font-weight: ${(p) => (p.$on ? 600 : 400)};
  border-bottom: 2px solid ${(p) => (p.$on ? SKY : "transparent")};
`;

const ScrollArea = styled.div`
  flex: 1;
  min-height: 0;
  display: flex;
  overflow: hidden;
`;

const Form = styled.div`
  flex: 1;
  display: flex;
  flex-direction: column;
  padding: 3px 6px 0 11px;
`;

const Field = styled.div`
  padding-bottom: 5px;
  label { display: block; line-height: 10px; }
`;

const ListHead = styled.div`
  display: flex;
  align-items: center;
  gap: 6px;
  margin: 1px 0 0 -11px;
  padding-left: 1px;
  p { flex: 1; line-height: 10px; white-space: pre-line; }
  > svg:first-child { align-self: flex-start; margin-right: -4px; }
`;

const StateHead = styled(ListHead)`
  padding-left: 11px;
  margin-top: 8px;
`;

const List = styled.div`
  flex: none;
  background: #fdfdfd;
`;

const Item = styled.label<{ $on?: boolean }>`
  display: flex;
  align-items: center;
  gap: 3px;
  height: 16px;
  padding-left: 1px;
  border: 1px solid ${(p) => (p.$on ? "#90cbec" : "transparent")};
  background: ${(p) => (p.$on ? "#e5f3fa" : "none")};
`;

const StateList = styled.div`
  flex: 1;
  min-height: 0;
  display: flex;
  overflow: hidden;
  background: #fdfdfd;
  ${List} { flex: 1; }
`;

const Track = styled.div<{ $w: number }>`
  display: flex;
  flex-direction: column;
  align-items: center;
  gap: 3px;
  width: ${(p) => p.$w}px;
  padding: 3px 0;
  background: #ededed;
`;

const Thumb = styled.i<{ $h: string }>`
  width: 6px;
  height: ${(p) => p.$h};
  border-radius: 3px;
  background: #b4b4b4;
`;

const Spacer = styled.i` flex: 1; `;

const RunRow = styled.div`
  display: flex;
  align-items: center;
  justify-content: flex-end;
  gap: 7px;
  height: 24px;
  padding-right: 4px;
`;

const RunButton = styled.button`
  display: flex;
  align-items: center;
  gap: 5px;
  width: 56px;
  height: 16px;
  padding: 0 3px 0 7px;
  border: 1px solid #999c9f;
  border-radius: 2px;
  background: #fff;
  span { flex: 1; text-align: left; }
`;

const Message = styled.div`
  display: flex;
  align-items: center;
  height: 31px;
  margin: 0 2px;
  padding: 0 4px 0 8px;
  background: #dfecda;
  div { flex: 1; padding-left: 11px; line-height: 13px; }
  a { color: #3a93cf; text-decoration: none; margin-right: 4px; }
  div svg { vertical-align: -2px; margin-right: 1px; }
`;

const DockTabs = styled.div`
  display: flex;
  align-items: center;
  height: 15px;
  margin-bottom: 2px;
  padding-left: 4px;
  gap: 8px;
  > svg { margin: 0 4px 0 auto; }
`;

const DockTab = styled(Plain)<{ $on?: boolean }>`
  gap: 3px;
  height: 14px;
  ${(p) => p.$on && css`
    margin-left: -4px;
    padding: 0 3px;
    border: 1px solid ${SKY};
    border-top: 0;
    background: #fff;
    color: ${BLUE};
  `}
`;

const Undo = () => (
  <svg width="11" height="10" viewBox="0 0 11 10" fill="none" stroke={SKY} strokeWidth="1.200">
    <path d="M3 2.200A4 4 0 1 1 5.500 9M.800 1.800v3.400h3.400M1 5 4 2" />
  </svg>
);

const dataTypes = ["Total Population", "Components of Change", "AGEGROUP", "RACE", "SEX", "HISP"];
const states = ["AL", "AK", "AZ", "AR", "CA", "CO", "CT", "DE", "DC"];

function Geoprocessing() {
  return (
    <RightColumn>
      <GeoPane>
        <PaneHead><h2>Geoprocessing</h2><Chevron /><Pin /><Close /></PaneHead>
        <TitleRow>
          <Plain aria-label="Back"><svg width="13" height="13" viewBox="0 0 13 13" fill="none" stroke="#555" strokeWidth=".9"><circle cx="6.500" cy="6.500" r="5.600" /><path d="M10 6.500H3.500M6 3.800 3.300 6.500 6 9.200" strokeWidth="1.200" /></svg></Plain>
          <h1>Download Population Estimates</h1>
          <Plain aria-label="Add"><svg width="13" height="13" viewBox="0 0 13 13" fill="none" stroke="#555" strokeWidth=".9"><circle cx="6.500" cy="6.500" r="5.600" /><path d="M6.500 3v7M3 6.500h7" strokeWidth="1.200" /></svg></Plain>
        </TitleRow>
        <ParamTabs>
          <ParamTab $on>Parameters</ParamTab>
          <ParamTab>Environments</ParamTab>
          <svg width="12" height="12" viewBox="0 0 12 12" fill="none" stroke={SKY}><circle cx="6" cy="6" r="5" fill="#e6f3fb" /><path d="M4.300 4.700c0-2.200 3.500-2.200 3.500 0C7.800 6 6 5.900 6 7.300M6 8.300v1" strokeWidth="1.100" /></svg>
        </ParamTabs>
        <ScrollArea>
          <Form>
            <Field><label htmlFor="year">Vintage Year (2020 and later)</label><Pick id="year" label="Vintage Year" value="2024" square /></Field>
            <Field><label htmlFor="geo">Geography (state or county only for 2020+)</label><Pick id="geo" label="Geography" value="county" square /></Field>
            <ListHead>
              <svg width="8" height="9" viewBox="0 0 8 9"><circle cx="4" cy="4.500" r="3.900" fill={SKY} /><path d="M4 3.800v3M4 2v1" stroke="#fff" /></svg>
              <p>{"Data Type (Total, Components, or\nDemographics)"}</p>
              <Plain>Select All</Plain><Undo />
            </ListHead>
            <List>
              {dataTypes.map((t, i) => (
                <Item key={t} $on={i === 2}><Check defaultChecked={i === 0} />{t}</Item>
              ))}
            </List>
            <StateHead>
              <p>{"State (required for county\ngeography)"}</p>
              <Plain>Select All</Plain><Undo />
            </StateHead>
            <StateList>
              <List>
                {states.map((t) => (
                  <Item key={t}><Check defaultChecked={t === "CO"} />{t}</Item>
                ))}
              </List>
              <Track $w={11}><Chevron up color="#777" /><Thumb $h="24px" /></Track>
            </StateList>
          </Form>
          <Track $w={10}><Chevron up color="#777" /><Thumb $h="76%" /><Spacer /><Chevron color="#777" /></Track>
        </ScrollArea>
        <RunRow>
          <svg width="12" height="11" viewBox="0 0 12 11" fill="none" stroke="#8a8d90" strokeWidth=".9"><path d="M.5 1.500h10M3.500 1.500v7.500H11M9 7l2 2-2 2" /></svg>
          <RunButton>
            <svg width="11" height="11" viewBox="0 0 11 11"><circle cx="5.500" cy="5.500" r="5" fill="#cfe7f6" stroke="#6fb5df" strokeWidth=".8" /><path d="M4 3v5l4-2.500z" fill="#2f86c5" /></svg>
            <span>Run</span>
            <Chevron />
          </RunButton>
        </RunRow>
        <Message>
          <svg width="9" height="9" viewBox="0 0 9 9"><circle cx="4.500" cy="4.500" r="4.200" fill="#3d9142" /><path d="M2.500 4.600 4 6l2.700-3" fill="none" stroke="#fff" strokeWidth="1.100" /></svg>
          <div>
            Download Population Estimates completed.
            <br />
            <a href="#details">View Details</a>
            <a href="#history">Open History</a>
            <a href="#suggestions">
              <svg width="8" height="10" viewBox="0 0 8 10"><circle cx="4" cy="3.600" r="3.200" fill="#f6cf52" stroke="#d9a92e" strokeWidth=".6" /><path d="M2.800 7.500h2.400M3 9h2" stroke="#777" /></svg>
              Suggestions
            </a>
          </div>
          <Close size={6} />
        </Message>
      </GeoPane>
      <DockTabs>
        <DockTab><svg width="11" height="11" viewBox="0 0 11 11"><circle cx="2.500" cy="2.500" r="2" fill={SKY} /><path d="M2.500 5v4.500H6M2.500 6.500H6" fill="none" stroke="#777" /><rect x="6" y="4.500" width="4.500" height="2.500" fill={Y} /><rect x="6" y="8" width="4.500" height="2.500" fill={Y} /></svg>Catalog</DockTab>
        <DockTab><svg width="10" height="11" viewBox="0 0 10 11"><path d="M.5 1.500h8l1 8.500h-8z" fill="#f1d64e" stroke="#c4a52e" strokeWidth=".7" /><path d="M3 8 8 2" stroke="#6b6b6b" strokeWidth="1.200" /></svg>Symbology</DockTab>
        <DockTab $on><svg width="12" height="10" viewBox="0 0 12 10"><path d="M4 2.500V.8h4v1.700" fill="none" stroke="#8d3d2c" /><rect x=".5" y="2.500" width="11" height="7" rx=".8" fill="#d0583e" /><path d="M.5 5.500h11M4 4.500v2M8 4.500v2" stroke="#fff" strokeWidth=".8" /></svg>Geoprocessing</DockTab>
        <Chevron />
      </DockTabs>
    </RightColumn>
  );
}

export default function App() {
  return (
    <Shell>
      <Global />
      <TabBar>
        {["Project", "Map", "Insert", "Analysis", "View", "Edit", "Imagery", "Share", "Help"].map((t) => (
          <MenuTab key={t}>{t}</MenuTab>
        ))}
        <TabGroup>
          <MenuTab>Feature Layer</MenuTab>
          <MenuTab $on>Labeling</MenuTab>
          <MenuTab>Data</MenuTab>
        </TabGroup>
      </TabBar>
      <RibbonBar />
      <Body>
        <Contents />
        <MapArea />
        <Geoprocessing />
      </Body>
    </Shell>
  );
}
